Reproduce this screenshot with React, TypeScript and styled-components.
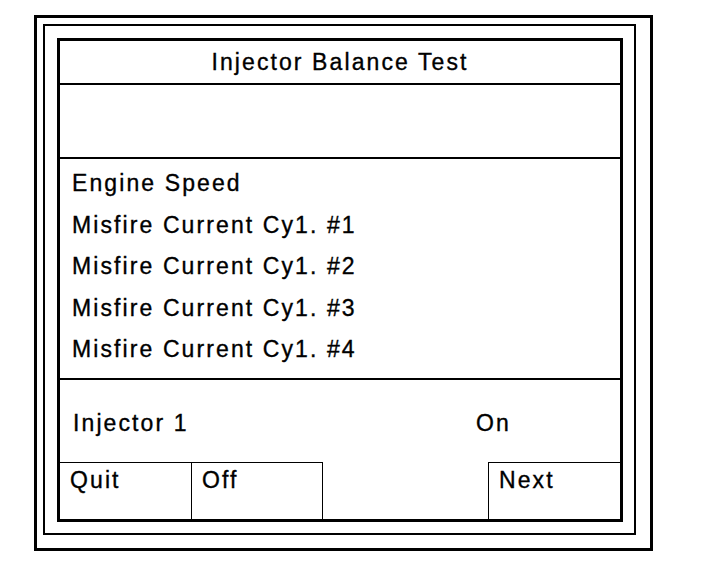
import React from "react";
import styled, { createGlobalStyle } from "styled-components";

const GlobalStyle = createGlobalStyle`
  html, body {
    margin: 0;
    padding: 0;
    background: #fff;
  }
  body {
    font-family: "Liberation Sans", Arial, sans-serif;
    color: #000;
  }
`;

const Page = styled.div`
  padding: 15px 0 0 34px;
`;

// the outer double frame sits off-centre: wider gap on the right and bottom
const OuterFrame = styled.div`
  box-sizing: border-box;
  width: 619px;
  height: 536px;
  border: 3px solid #000;
  padding: 6px 14px 13px 6px;
`;

const MiddleFrame = styled.div`
  box-sizing: border-box;
  height: 100%;
  border: 2px solid #000;
  padding: 12px 11px 11px 12px;
`;

const Screen = styled.div`
  box-sizing: border-box;
  height: 100%;
  border: 3px solid #000;
  display: flex;
  flex-direction: column;
  font-size: 23px;
  letter-spacing: 2.1px;
  -webkit-text-stroke: 0.35px #000;
`;

const Title = styled.div`
  height: 42px;
  border-bottom: 2px solid #000;
  display: flex;
  align-items: center;
  justify-content: center;
`;

const Blank = styled.div`
  height: 72px;
  border-bottom: 2px solid #000;
`;

const ParamList = styled.div`
  box-sizing: border-box;
  height: 221px;
  padding: 4px 0 0 12px;
  border-bottom: 2px solid #000;
`;

const ParamRow = styled.div`
  height: 41.5px;
  line-height: 41.5px;
`;

const StatusRow = styled.div`
  height: 82px;
  display: flex;
  align-items: center;
  padding: 5px 0 0 13px;
  box-sizing: border-box;
`;

const StatusLabel = styled.span`
  width: 403px;
`;

const Keys = styled.div`
  flex: 1;
  display: grid;
  grid-template-columns: 132px 131px 1fr 132px;
`;

const Key = styled.div<{ $side?: "left" | "right" | "none" }>`
  box-sizing: border-box;
  padding: 4px 0 0 10px;
  line-height: 26px;
  border-top: ${({ $side }) => ($side === "none" ? "none" : "1px solid #000")};
  border-right: ${({ $side }) => ($side === "right" ? "1px solid #000" : "none")};
  border-left: ${({ $side }) => ($side === "left" ? "1px solid #000" : "none")};
`;

const params = [
  "Engine Speed",
  "Misfire Current Cy1. #1",
  "Misfire Current Cy1. #2",
  "Misfire Current Cy1. #3",
  "Misfire Current Cy1. #4",
];

export default function App() {
  return (
    <>
      <GlobalStyle />
      <Page>
        <OuterFrame>
          <MiddleFrame>
            <Screen>
              <Title>Injector Balance Test</Title>
              <Blank />
              <ParamList>
                {params.map((p) => (
                  <ParamRow key={p}>{p}</ParamRow>
                ))}
              </ParamList>
              <StatusRow>
                <StatusLabel>Injector 1</StatusLabel>
                <span>On</span>
              </StatusRow>
              <Keys>
                <Key $side="right">Quit</Key>
                <Key $side="right">Off</Key>
                <Key $side="none" />
                <Key $side="left">Next</Key>
              </Keys>
            </Screen>
          </MiddleFrame>
        </OuterFrame>
      </Page>
    </>
  );
}
